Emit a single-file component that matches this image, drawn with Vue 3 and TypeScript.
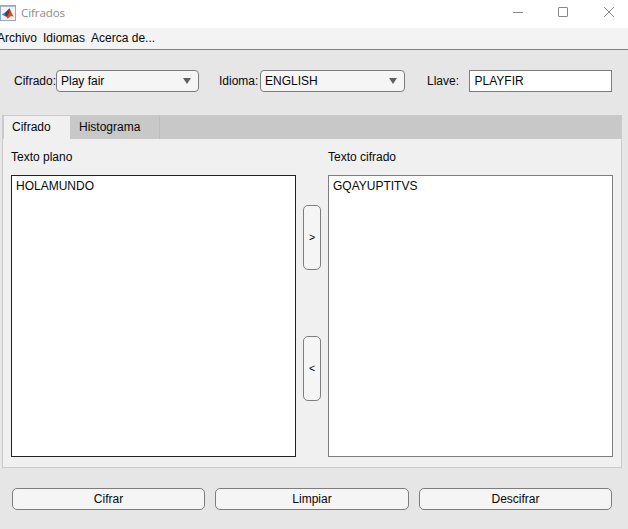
<script setup lang="ts">
import { ref } from 'vue'

const menus: string[] = ['Archivo', 'Idiomas', 'Acerca de...']
const tabs: string[] = ['Cifrado', 'Histograma']
const actions: string[] = ['Cifrar', 'Limpiar', 'Descifrar']
const activeTab = ref<string>('Cifrado')
const cipher = ref<string>('Play fair')
const language = ref<string>('ENGLISH')
const keyText = ref<string>('PLAYFIR')
const plainText = ref<string>('HOLAMUNDO')
const cipherText = ref<string>('GQAYUPTITVS')
</script>

<template>
  <div class="window">
    <header class="titlebar">
      <svg class="logo" width="16" height="16" viewBox="0 0 16 16">
        <rect x="0.5" y="0.5" width="15" height="15" fill="#f1f3f6" stroke="#9aa9bc" />
        <path d="M1 1.5h14" stroke="#a9bace" />
        <path d="M1.7 9.4 5.2 7.6 7 8.8 5.1 11.2Z" fill="#3f86b5" />
        <path d="M5.2 7.6 9.3 3.4 7.8 9.8 5.1 11.2Z" fill="#27466b" />
        <path d="M9.3 3.2C10.6 4.3 11.9 9 14 12 12.3 10.9 11.2 10.5 9.6 12 8.8 13 7.9 13.5 7.2 13.6 7 12 6.4 11.2 5.1 11.2 7.5 9.8 8.3 5.5 9.3 3.2Z" fill="#d4501f" />
        <path d="M9.3 3.2C9.9 5.6 9.2 9 6.6 11.8 6.4 11.4 6 11.1 5.6 11 7.7 9.6 8.4 5.5 9.3 3.2Z" fill="#7c2b22" />
      </svg>
      <span class="title">Cifrados</span>
      <svg class="controls" width="102" height="12" viewBox="0 0 102 12" fill="none" stroke="#888">
        <path d="M0 6.5h10" />
        <rect x="45.5" y="1.5" width="9" height="9" rx="0.5" />
        <path d="M91 1l10 10M101 1L91 11" />
      </svg>
    </header>

    <nav class="menubar">
      <span v-for="m in menus" :key="m">{{ m }}</span>
    </nav>

    <section class="form">
      <label class="l-cipher">Cifrado:</label>
      <button class="select">
        <span>{{ cipher }}</span>
        <svg width="8" height="6" viewBox="0 0 8 6"><path d="M0 0h8L4 6z" fill="#606060" /></svg>
      </button>
      <label class="l-lang">Idioma:</label>
      <button class="select wide">
        <span>{{ language }}</span>
        <svg width="8" height="6" viewBox="0 0 8 6"><path d="M0 0h8L4 6z" fill="#606060" /></svg>
      </button>
      <label class="l-key">Llave:</label>
      <input v-model="keyText" class="key" type="text" />
    </section>

    <main class="panel">
      <div class="tabs">
        <button
          v-for="t in tabs"
          :key="t"
          class="tab"
          :class="{ active: t === activeTab }"
          @click="activeTab = t"
        >{{ t }}</button>
      </div>
      <div class="body">
        <div class="column">
          <label>Texto plano</label>
          <textarea v-model="plainText" class="area focused" spellcheck="false"></textarea>
        </div>
        <div class="arrows">
          <button class="btn arrow">&gt;</button>
          <button class="btn arrow">&lt;</button>
        </div>
        <div class="column">
          <label>Texto cifrado</label>
          <textarea v-model="cipherText" class="area" spellcheck="false"></textarea>
        </div>
      </div>
    </main>

    <footer class="actions">
      <button v-for="a in actions" :key="a" class="btn">{{ a }}</button>
    </footer>
  </div>
</template>

<style>
body {
  margin: 0;
  overflow: hidden;
}
</style>

<style scoped>
.window {
  width: 628px;
  height: 529px;
  background: #e6e6e6;
  display: flex;
  flex-direction: column;
  overflow: hidden;
  color: #080808;
  font: 12px/14px "Liberation Sans", Arial, sans-serif;
}
.window *,
.window {
  box-sizing: border-box;
}
button,
input,
textarea {
  font: inherit;
  color: inherit;
  margin: 0;
  padding: 0;
  outline: none;
}
.titlebar {
  flex: none;
  height: 28px;
  background: #fff;
  display: flex;
  align-items: center;
  padding: 0 13px 2px 0;
}
.title {
  margin-left: 5px;
  color: #8c8c8c;
  font: 11.6px/16px "Open Sans", "Noto Sans", sans-serif;
  letter-spacing: -0.12px;
}
.controls {
  margin-left: auto;
  margin-top: -2px;
}
.menubar {
  flex: none;
  height: 22px;
  background: #f3f3f3;
  border-bottom: 1px solid #808080;
  display: flex;
  gap: 6px;
  padding-top: 3px;
}
.menubar span:first-child {
  margin-left: -3px;
}
.form {
  flex: none;
  height: 65px;
  display: flex;
  padding: 20px 0 0 14px;
  line-height: 22px;
}
.l-cipher {
  width: 42px;
}
.l-lang {
  width: 41px;
  margin-left: 20px;
}
.l-key {
  width: 42px;
  margin-left: 22px;
}
.select {
  width: 143px;
  height: 22px;
  border: 1px solid #7d7d7d;
  border-radius: 4px;
  background: #f5f5f5;
  display: flex;
  align-items: center;
  justify-content: space-between;
  padding: 0 7px 0 4px;
}
.select.wide {
  width: 145px;
}
.key {
  width: 143px;
  height: 22px;
  border: 1px solid #7d7d7d;
  background: #fff;
  padding-left: 4.5px;
}
.panel {
  flex: none;
  width: 620px;
  height: 353px;
  margin-left: 2px;
  border: 1px solid #cacaca;
  background: #f0f0f0;
}
.tabs {
  display: flex;
  height: 23px;
  background: #c8c8c8;
}
.tab {
  width: 90px;
  border: 0;
  border-right: 1px solid #bdbdbd;
  background: transparent;
  text-align: left;
  padding: 0 0 2px 9px;
}
.tab.active {
  width: 67px;
  border: 0;
  border-left: 1px solid #cacaca;
  padding-left: 8px;
  background: #f0f0f0;
}
.body {
  display: grid;
  grid-template-columns: 285px 18px 285px;
  column-gap: 7px;
  padding: 11px 8px 0;
}
.column {
  display: flex;
  flex-direction: column;
}
.column label {
  height: 25px;
}
.area {
  width: 285px;
  height: 282px;
  resize: none;
  overflow: hidden;
  border: 1px solid #7d7d7d;
  border-radius: 0;
  background: #fff;
  padding: 3px 4px;
}
.area.focused {
  border-color: #222;
}
.btn {
  height: 22px;
  border: 1px solid #7d7d7d;
  border-radius: 5px;
  background: #f5f5f5;
}
.arrows {
  display: flex;
  flex-direction: column;
  gap: 66px;
  padding-top: 55px;
}
.arrow {
  width: 18px;
  height: 65px;
  font-size: 10.5px;
  padding-bottom: 2px;
  color: #000;
}
.actions {
  display: grid;
  grid-template-columns: 193px 194px 193px;
  column-gap: 10px;
  padding: 20px 0 0 12px;
}
</style>
